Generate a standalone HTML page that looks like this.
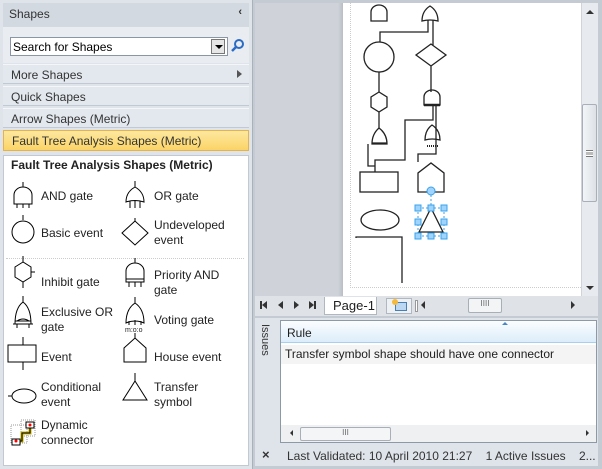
<!DOCTYPE html>
<html><head><meta charset="utf-8"><style>
*{margin:0;padding:0;box-sizing:border-box}
body{width:602px;height:469px;overflow:hidden;background:#c5cbd3;font-family:"Liberation Sans",sans-serif;font-size:12px;color:#1e1e1e;position:relative}
.a{position:absolute}
.row{position:absolute;left:3px;width:246px;height:20px;background:#e3e8ee;border-top:1px solid #f4f6f9;border-bottom:1px solid #c2c9d2;padding:3px 0 0 8px;color:#333}
.lbl{position:absolute;font-size:12px;line-height:15px;color:#222}
.tri{position:absolute;border-top:4px solid transparent;border-bottom:4px solid transparent}
</style></head><body>
<div class="a" style="left:0;top:0;width:253px;height:469px;background:#dfe4ea;border-right:1px solid #a9b1bb"></div>
<div class="a" style="left:3px;top:3px;width:246px;height:24px;background:#d3d9e0;padding:4px 0 0 6px;color:#333">Shapes<span style="position:absolute;right:7px;top:3px;font-size:11px;font-weight:bold">‹</span></div>
<div class="a" style="left:3px;top:27px;width:246px;height:36px;background:#e9edf2"></div>
<div class="a" style="left:10px;top:37px;width:218px;height:19px;background:#fff;border:1px solid #8a96a3;padding:2px 0 0 2px;color:#000">Search for Shapes</div>
<div class="a" style="left:211px;top:39px;width:14px;height:15px;background:#e6e6e6;border:1px solid #777"><div class="a" style="left:3px;top:5px;border-left:4px solid transparent;border-right:4px solid transparent;border-top:4px solid #000"></div></div>
<svg class="a" style="left:231px;top:38px" width="14" height="14"><circle cx="8" cy="6" r="4" fill="none" stroke="#2a6cc4" stroke-width="2"/><line x1="5" y1="9" x2="1" y2="13" stroke="#2a6cc4" stroke-width="2.5"/></svg>
<div class="row" style="top:64px">More Shapes<span style="position:absolute;right:7px;top:5px;border-top:4px solid transparent;border-bottom:4px solid transparent;border-left:5px solid #555"></span></div>
<div class="row" style="top:86px">Quick Shapes</div>
<div class="row" style="top:108px">Arrow Shapes (Metric)</div>
<div class="row" style="top:130px;height:21px;background:linear-gradient(#fde8a0,#fbd466);border:1px solid #e5b34a">Fault Tree Analysis Shapes (Metric)</div>
<div class="a" style="left:3px;top:155px;width:246px;height:311px;background:#fff;border:1px solid #c2c9d2"></div>
<div class="a" style="left:11px;top:158px;font-weight:bold;color:#222">Fault Tree Analysis Shapes (Metric)</div>
<div class="a" style="left:6px;top:258px;width:238px;border-top:1px dotted #ccc"></div>
<svg class="a" style="left:0;top:170px" width="160" height="290" fill="none" stroke="#000" stroke-width="1">
<path d="M23 12v5M14 34v-9a9 8 0 0 1 18 0v9zM17 34v4M23 34v4M29 34v4"/>
<path d="M23 45v5"/><circle cx="23" cy="62" r="11"/>
<path d="M23 86v6M23 92l-8 5v10l8 5 8-5v-10zM31 102h4M23 112v6"/>
<path d="M23 126v6M15 154q0-16 8-22q8 6 8 22zM15 151h16M13 154h20M17 154v4M29 154v4M17 151q6-4 12 0"/>
<path d="M23 167v8M8 175h28v17H8zM23 192v8"/>
<path d="M8 226h4"/><ellipse cx="24" cy="226" rx="12" ry="7"/>
</svg>
<svg class="a" style="left:110px;top:170px" width="60" height="260" fill="none" stroke="#000" stroke-width="1">
<path d="M25 11v6M16 32q0-10 9-15q9 5 9 15q-9-3-18 0zM20 31v7M25 30v8M30 31v7"/>
<path d="M25 48v3M25 51l-13 12 13 12 13-12z"/>
<path d="M25 88v5M16 112v-11a9 8 0 0 1 18 0v11zM16 109h18M16 112h18M19 112v5M25 112v5M31 112v5"/>
<path d="M25 127v6M16 153q0-14 9-20q9 6 9 20q-9-4-18 0zM19 151v4M25 150v5M31 151v4"/>
<path d="M25 163v5M14 178l11-10 11 10v14H14z"/>
<path d="M25 203v8M25 211l-12 19h24z"/>
</svg>
<div class="a" style="left:125px;top:327px;font-size:7px;line-height:7px">m:o:o</div>
<svg class="a" style="left:8px;top:418px" width="30" height="30"><rect x="3" y="7" width="16" height="18" fill="none" stroke="#999" stroke-dasharray="1 1"/><rect x="13" y="2" width="14" height="16" fill="none" stroke="#999" stroke-dasharray="1 1"/><path d="M22 7v8H14v8H8" fill="none" stroke="#c9b000" stroke-width="3"/><path d="M22 7v8H14v8H8" fill="none" stroke="#000" stroke-width="1"/><rect x="18" y="4" width="8" height="6" fill="#fff" stroke="#000"/><rect x="4" y="21" width="8" height="6" fill="#fff" stroke="#000"/><circle cx="22" cy="7" r="1.5" fill="red"/><circle cx="8" cy="23" r="1.5" fill="red"/></svg>
<div class="lbl" style="left:41px;top:189px">AND gate</div>
<div class="lbl" style="left:154px;top:189px">OR gate</div>
<div class="lbl" style="left:41px;top:226px">Basic event</div>
<div class="lbl" style="left:154px;top:218px">Undeveloped<br>event</div>
<div class="lbl" style="left:41px;top:275px">Inhibit gate</div>
<div class="lbl" style="left:154px;top:268px">Priority AND<br>gate</div>
<div class="lbl" style="left:41px;top:305px">Exclusive OR<br>gate</div>
<div class="lbl" style="left:154px;top:313px">Voting gate</div>
<div class="lbl" style="left:41px;top:350px">Event</div>
<div class="lbl" style="left:154px;top:350px">House event</div>
<div class="lbl" style="left:41px;top:380px">Conditional<br>event</div>
<div class="lbl" style="left:154px;top:380px">Transfer<br>symbol</div>
<div class="lbl" style="left:41px;top:418px">Dynamic<br>connector</div>
<div class="a" style="left:255px;top:3px;width:326px;height:293px;background:#cfd3d9"></div>
<div class="a" style="left:338px;top:3px;width:5px;height:293px;background:linear-gradient(90deg,#cfd3d9,#b9bec5)"></div>
<div class="a" style="left:343px;top:3px;width:238px;height:293px;background:#fff"></div>
<div class="a" style="left:350px;top:3px;width:231px;height:285px;border-left:1px dotted #ccc;border-bottom:1px dotted #ccc"></div>
<svg class="a" style="left:343px;top:0" width="238" height="296" fill="none" stroke="#222" stroke-width="1.3">
<g transform="translate(-343,0)">
<path d="M371 21v-9a8 7 0 0 1 16 0v9z"/>
<path d="M422 21q0-10 8-15q8 5 8 15q-8-2-16 0z"/>
<path d="M428 20v12H380v10M433 20v25"/>
<circle cx="379" cy="57" r="15"/>
<path d="M431 44l-15 11 15 11 15-11zM431 66v26M379 72v20"/>
<path d="M379 92l-8 5v10l8 5 8-5v-10zM379 112v16"/>
<path d="M424 105v-8a8 7 0 0 1 16 0v8z"/><path d="M424 105h16" stroke-width="2.5"/>
<path d="M433 106v14h-28v40h-30v12M436 106v48h-18v8M372 144q0-10 7-16q8 6 8 16zM372 143h15M368 144v22h7"/>
<path d="M425 140q0-10 7-15q8 5 8 15q-8-2-15 0z"/><path d="M427 146h12" stroke-width="2" stroke-dasharray="1 1"/>
<rect x="360" y="172" width="38" height="20"/>
<path d="M418 192v-19l13-10 13 10v19z"/>
<ellipse cx="380" cy="220" rx="19" ry="10"/>
<path d="M419 232l12-24 12 24z"/>
<path d="M356 238v-1h46v46"/>
</g></svg>
<svg class="a" style="left:410px;top:182px" width="50" height="60"><g fill="#9fd4ff" stroke="#3aa2e8"><circle cx="21" cy="9" r="4"/><path d="M8 26h26M8 26v28h26V26M21 13v13" fill="none" stroke-dasharray="2 2"/><rect x="5" y="23" width="6" height="6"/><rect x="18" y="23" width="6" height="6"/><rect x="31" y="23" width="6" height="6"/><rect x="5" y="37" width="6" height="6"/><rect x="31" y="37" width="6" height="6"/><rect x="5" y="51" width="6" height="6"/><rect x="18" y="51" width="6" height="6"/><rect x="31" y="51" width="6" height="6"/></g></svg>
<div class="a" style="left:581px;top:3px;width:17px;height:293px;background:#e7eaee;border-left:1px solid #d0d4da"></div>
<div class="a" style="left:586px;top:10px;border-left:4px solid transparent;border-right:4px solid transparent;border-bottom:4px solid #333"></div>
<div class="a" style="left:586px;top:286px;border-left:4px solid transparent;border-right:4px solid transparent;border-top:4px solid #333"></div>
<div class="a" style="left:582px;top:104px;width:15px;height:98px;background:linear-gradient(90deg,#f3f5f7,#dde1e6);border:1px solid #a8afb8;border-radius:2px"></div>
<div class="a" style="left:586px;top:150px;width:7px;height:7px;border-top:1px solid #777;border-bottom:1px solid #777;background:linear-gradient(#fff 0 33%,#777 33% 50%,#fff 50% 66%,#777 66% 83%,#fff 83%)"></div>
<div class="a" style="left:255px;top:296px;width:343px;height:20px;background:#dfe3e8"></div>
<!-- nav arrows -->
<div class="a" style="left:260px;top:301px;width:2px;height:8px;background:#333"></div>
<div class="tri" style="left:262px;top:301px;border-right:5px solid #333"></div>
<div class="tri" style="left:278px;top:301px;border-right:5px solid #333"></div>
<div class="tri" style="left:294px;top:301px;border-left:5px solid #333"></div>
<div class="tri" style="left:309px;top:301px;border-left:5px solid #333"></div>
<div class="a" style="left:314px;top:301px;width:2px;height:8px;background:#333"></div>
<div class="a" style="left:324px;top:297px;width:53px;height:18px;background:#fff;border:1px solid #b0b7c0;border-top:none;padding:1px 0 0 8px;font-size:13px">Page-1</div>
<div class="a" style="left:386px;top:298px;width:26px;height:16px;background:#eef1f4;border:1px solid #b0b7c0"><div class="a" style="left:8px;top:3px;width:12px;height:9px;background:#bcd7f2;border:1px solid #4a7fb6"></div><div class="a" style="left:5px;top:0;width:6px;height:6px;border-radius:3px;background:#f6b93b"></div></div>
<div class="a" style="left:415px;top:300px;width:3px;height:12px;border:1px solid #999;background:#fff"></div>
<div class="tri" style="left:421px;top:301px;border-right:4px solid #333"></div>
<div class="a" style="left:468px;top:298px;width:34px;height:15px;background:#f2f4f6;border:1px solid #a8afb8;border-radius:2px;font-size:8px;text-align:center;color:#666">IIII</div>
<div class="tri" style="left:571px;top:301px;border-left:4px solid #333"></div>
<div class="a" style="left:255px;top:318px;width:343px;height:148px;background:#dfe4ea"></div>
<div class="a" style="left:259px;top:324px;writing-mode:vertical-rl;font-size:11px;color:#333">Issues</div>
<div class="a" style="left:280px;top:320px;width:317px;height:123px;background:#fff;border:1px solid #8e99a6"></div>
<div class="a" style="left:281px;top:321px;width:315px;height:22px;background:linear-gradient(#fbfdff,#dcedf9);border-bottom:1px solid #a6d0ee;padding:5px 0 0 6px">Rule</div>
<div class="a" style="left:502px;top:322px;border-left:3px solid transparent;border-right:3px solid transparent;border-bottom:3px solid #4a86c4"></div>
<div class="a" style="left:281px;top:345px;width:315px;height:19px;background:#f4f4f4;padding:2px 0 0 4px">Transfer symbol shape should have one connector</div>
<div class="a" style="left:281px;top:425px;width:315px;height:17px;background:#eef0f2"></div>
<div class="a" style="left:290px;top:430px;border-top:3px solid transparent;border-bottom:3px solid transparent;border-right:3px solid #333"></div>
<div class="a" style="left:300px;top:427px;width:91px;height:14px;background:#f4f5f7;border:1px solid #a8afb8;border-radius:2px;font-size:8px;text-align:center;color:#666">III</div>
<div class="a" style="left:586px;top:430px;border-top:3px solid transparent;border-bottom:3px solid transparent;border-left:3px solid #333"></div>
<div class="a" style="left:262px;top:447px;font-size:13px;color:#333;font-weight:bold">×</div>
<div class="a" style="left:287px;top:449px;color:#333">Last Validated: 10 April 2010 21:27 &nbsp;&nbsp; 1 Active Issues &nbsp;&nbsp; 2...</div>
</body></html>
